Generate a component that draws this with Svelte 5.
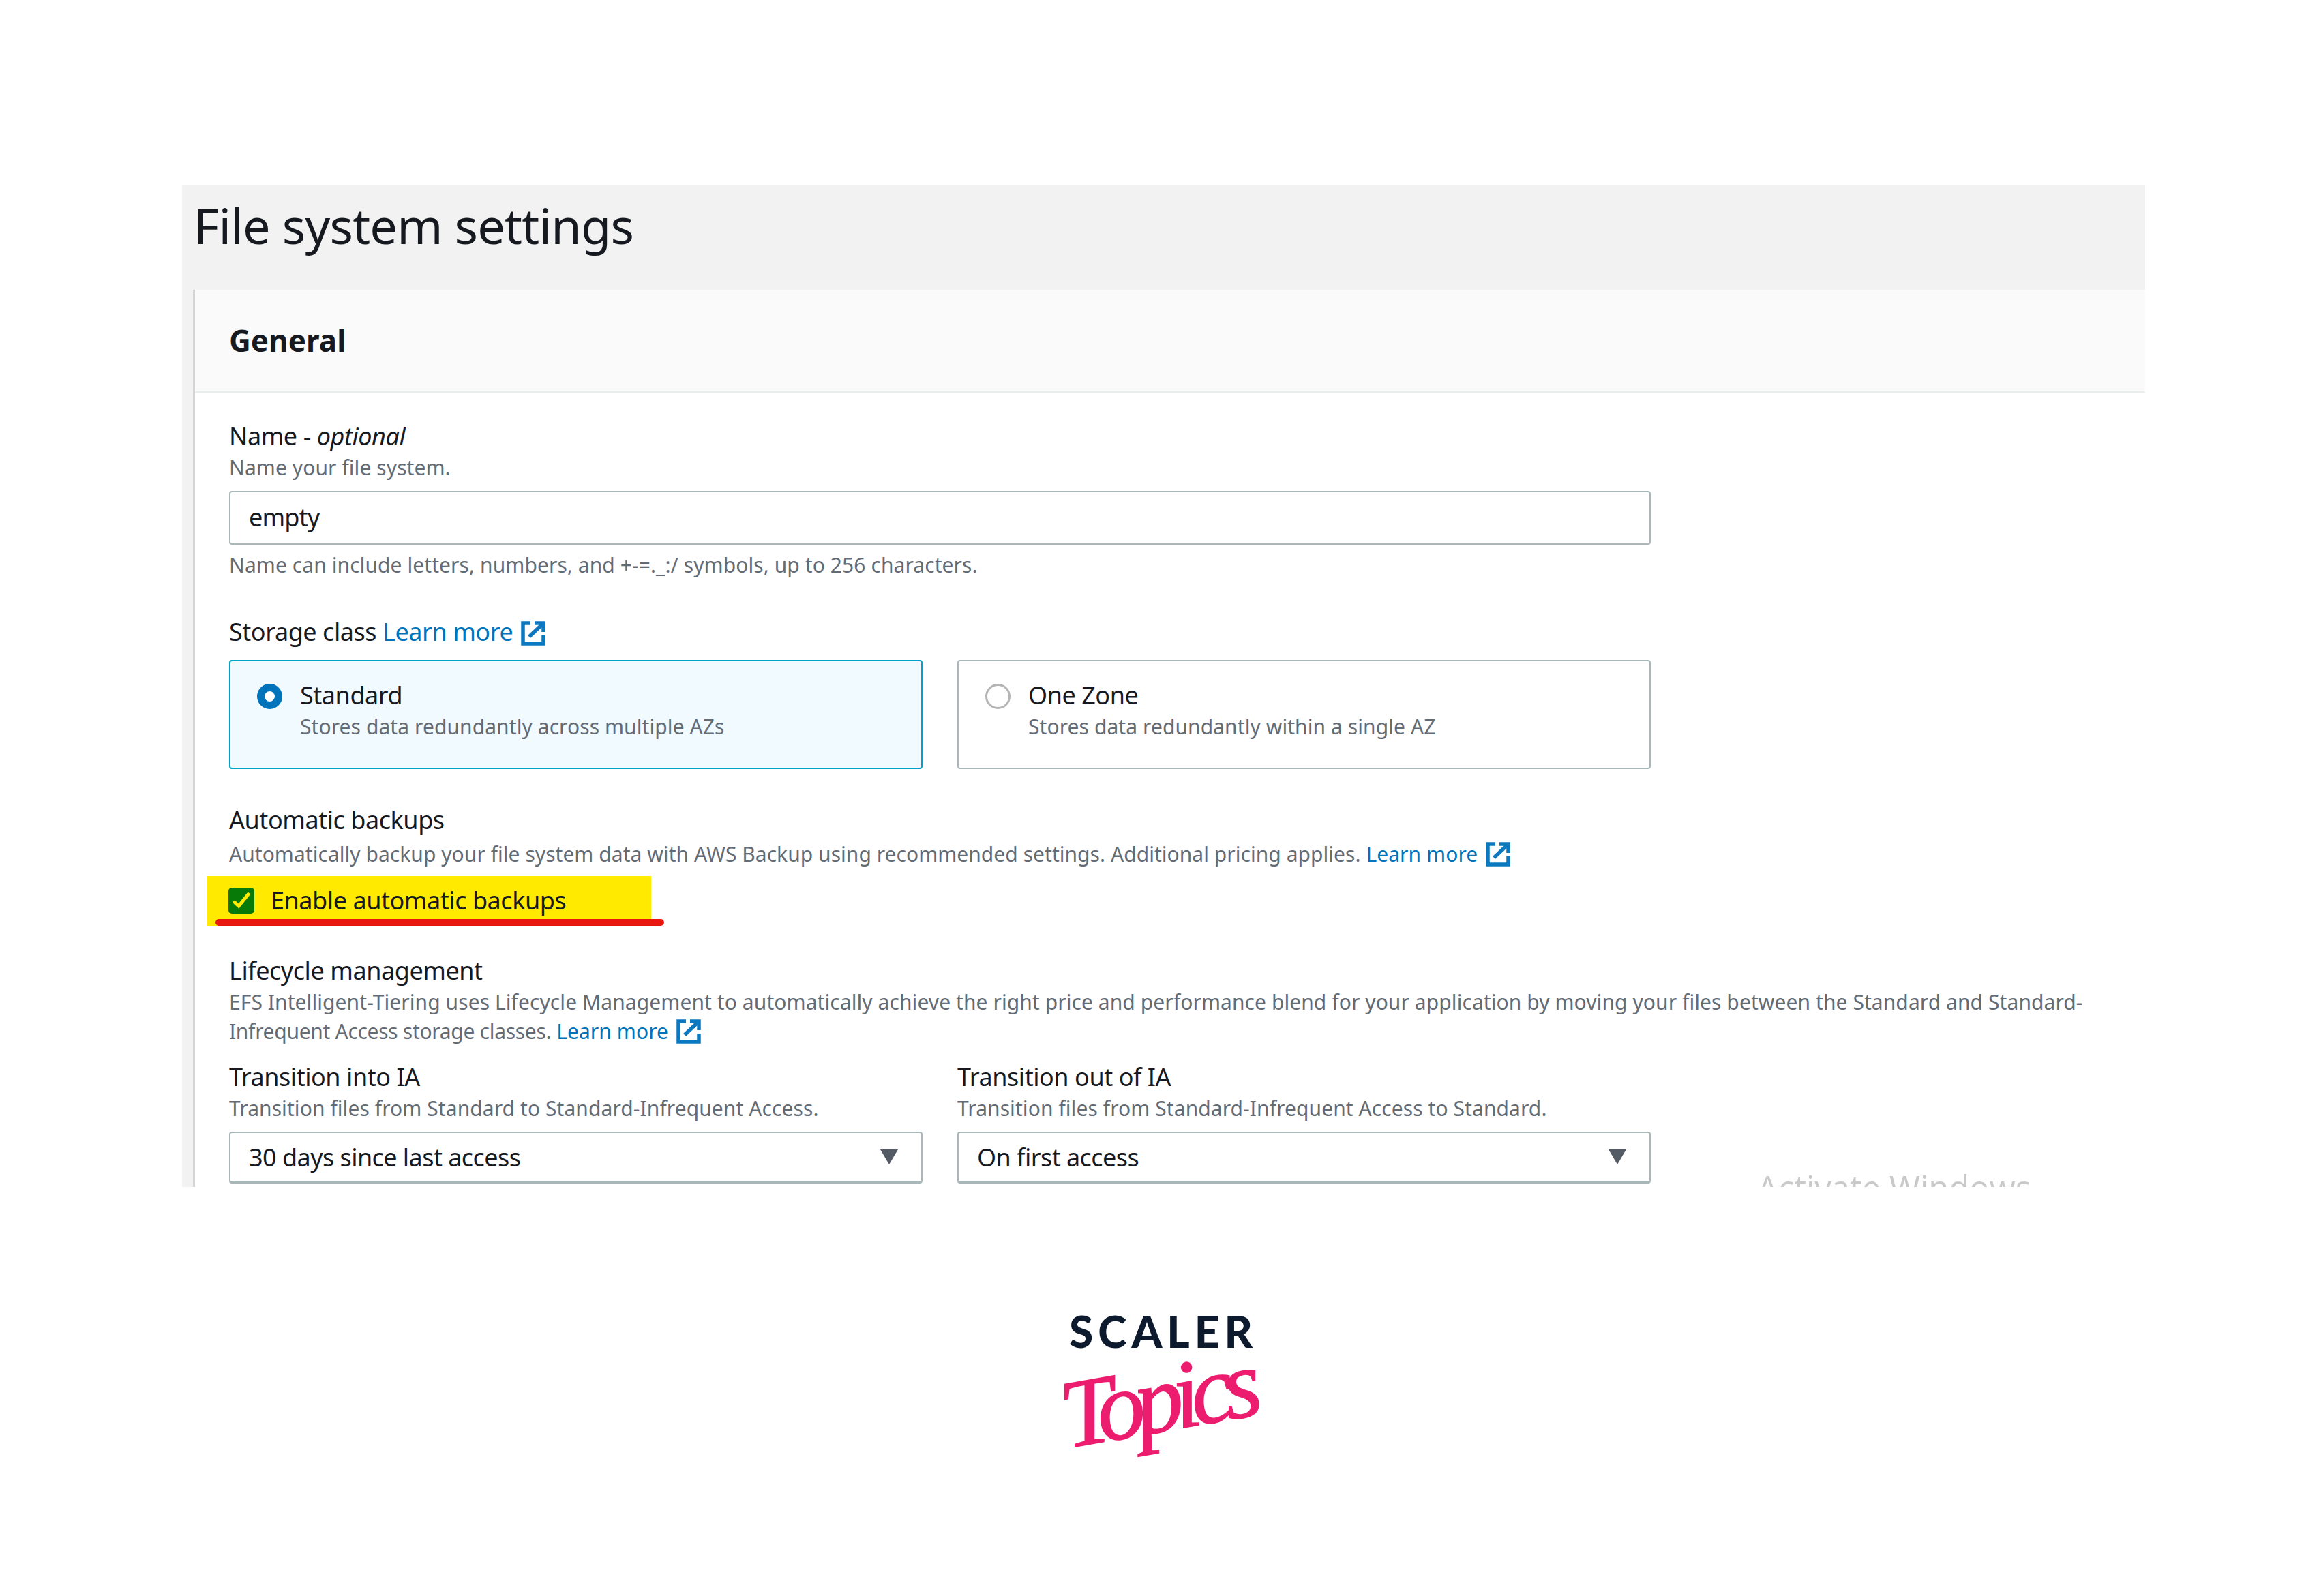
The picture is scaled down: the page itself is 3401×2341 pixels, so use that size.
<script>
  const selects = [
    { label: 'Transition into IA', desc: 'Transition files from Standard to Standard-Infrequent Access.', value: '30 days since last access' },
    { label: 'Transition out of IA', desc: 'Transition files from Standard-Infrequent Access to Standard.', value: 'On first access' }
  ];
</script>

{#snippet ext()}
  <svg class="ext" viewBox="0 0 36 36" aria-hidden="true">
    <path d="M14 3H3v30h30V21" fill="none" stroke="#0b78c0" stroke-width="5.5" />
    <path d="M20 3h13v13" fill="none" stroke="#0b78c0" stroke-width="5.5" />
    <path d="M31 5L12 23" fill="none" stroke="#0b78c0" stroke-width="5.5" />
  </svg>
{/snippet}

<div class="shot">
  <h1>File system settings</h1>
  <section class="panel">
    <header><h2>General</h2></header>
    <div class="body">
      <div class="label name-label">Name - <em>optional</em></div>
      <div class="desc name-desc">Name your file system.</div>
      <div class="input">empty</div>
      <div class="desc help">Name can include letters, numbers, and +-=._:/ symbols, up to 256 characters.</div>

      <div class="label storage">Storage class <a>Learn more</a>{@render ext()}</div>
      <div class="cards">
        <div class="card on">
          <span class="radio"></span>
          <div>
            <div class="label">Standard</div>
            <div class="desc">Stores data redundantly across multiple AZs</div>
          </div>
        </div>
        <div class="card">
          <span class="radio"></span>
          <div>
            <div class="label">One Zone</div>
            <div class="desc">Stores data redundantly within a single AZ</div>
          </div>
        </div>
      </div>

      <div class="label backups">Automatic backups</div>
      <div class="desc backups-desc"><span class="tight">Automatically backup your file system data with AWS Backup using recommended settings. Additional pricing applies.</span> <a>Learn more</a>{@render ext()}</div>
      <div class="mark">
        <span class="check">
          <svg viewBox="0 0 38 38" aria-hidden="true"><path d="M7.5 20l7.5 7L30.5 8" fill="none" stroke="#ffea00" stroke-width="5" /></svg>
        </span>
        <span class="label">Enable automatic backups</span>
      </div>
      <div class="underline"></div>

      <div class="label life">Lifecycle management</div>
      <div class="desc life-desc">EFS Intelligent-Tiering uses Lifecycle Management to automatically achieve the right price and performance blend for your application by moving your files between the Standard and Standard-<br /><span class="tighter">Infrequent Access storage classes.</span> <a>Learn more</a>{@render ext()}</div>

      <div class="cards selects">
        {#each selects as s}
          <div class="col">
            <div class="label">{s.label}</div>
            <div class="desc">{s.desc}</div>
            <div class="select">
              <span>{s.value}</span>
              <svg viewBox="0 0 26 22" aria-hidden="true"><path d="M0 0h26L13 22z" fill="#545b64" /></svg>
            </div>
          </div>
        {/each}
      </div>
    </div>
    <div class="activate">Activate Windows</div>
  </section>
</div>

<div class="logo">
  <div class="scaler">SCALER</div>
  <div class="topics">Topics</div>
</div>

<style>
  :global(body) {
    background: #fff;
    font-family: "Noto Sans", sans-serif;
    color: #16191f;
  }
  .shot {
    margin: 272px 255px 0 267px;
    height: 1469px;
    background: #f2f2f2;
    overflow: hidden;
    position: relative;
    padding-left: 16px;
  }
  h1 {
    margin: 0;
    height: 153px;
    padding-left: 1px;
    font-size: 72px;
    font-weight: 400;
    line-height: 116px;
    letter-spacing: -.8px;
    color: #16191f;
  }
  .panel {
    background: #fff;
    border-left: 3px solid #d5d5d5;
    height: 1316px;
  }
  header {
    height: 149px;
    background: #fafafa;
    border-bottom: 2px solid #eaeded;
    padding-left: 50px;
  }
  h2 {
    margin: 0;
    font-size: 44px;
    font-weight: 700;
    line-height: 148px;
  }
  .body {
    padding-left: 50px;
    font-size: 36px;
  }
  .label {
    font-size: 36px;
    line-height: 44px;
    letter-spacing: -.45px;
  }
  .desc {
    font-size: 30px;
    line-height: 40px;
    letter-spacing: .08px;
    color: #636b75;
  }
  .tight { letter-spacing: .04px; }
  .tighter { letter-spacing: -.3px; }
  a { color: #0073bb; }
  .ext {
    width: 36px;
    height: 36px;
    margin-left: 12px;
    vertical-align: -7px;
  }
  .name-label { margin-top: 42px; }
  .name-desc { margin-top: 4px; }
  .input {
    margin-top: 14px;
    width: 2085px;
    height: 79px;
    box-sizing: border-box;
    border: 2px solid #aab7b8;
    border-radius: 4px;
    padding-left: 27px;
    font-size: 36px;
    line-height: 74px;
    letter-spacing: -.8px;
  }
  .help { margin-top: 10px; }
  .storage { margin-top: 56px; }
  .cards {
    display: flex;
    gap: 51px;
    margin-top: 19px;
    width: 2085px;
  }
  .card {
    flex: 1;
    height: 160px;
    box-sizing: border-box;
    border: 2px solid #aab7b8;
    border-radius: 4px;
    display: flex;
    gap: 26px;
    padding: 28px 0 0 39px;
  }
  .card .desc { margin-top: 4px; }
  .card.on {
    border-color: #00a1c9;
    background: #f1faff;
  }
  .radio {
    width: 37px;
    height: 37px;
    box-sizing: border-box;
    border: 3px solid #b5b5b5;
    border-radius: 50%;
    background: #fff;
    margin-top: 5px;
  }
  .on .radio { border: 11px solid #0073bb; }
  .backups { margin-top: 53px; }
  .backups-desc { margin-top: 8px; }
  .mark {
    display: flex;
    align-items: center;
    gap: 24px;
    width: 652px;
    height: 73px;
    box-sizing: border-box;
    margin: 12px 0 0 -33px;
    padding: 0 0 2px 32px;
    background: #ffea00;
  }
  .check {
    width: 38px;
    height: 38px;
    background: #087a08;
    border-radius: 5px;
    display: flex;
  }
  .underline {
    width: 658px;
    height: 10px;
    margin: -10px 0 0 -20px;
    background: #e8170f;
    border-radius: 5px;
    position: relative;
  }
  .life { margin-top: 44px; }
  .life-desc { margin-top: 2px; line-height: 43px; }
  .selects { margin-top: 24px; }
  .col { flex: 1; }
  .col .desc { margin-top: 4px; }
  .select {
    margin-top: 14px;
    height: 76px;
    box-sizing: border-box;
    border: 2px solid #aab7b8;
    border-bottom-width: 4px;
    border-radius: 4px;
    padding: 0 34px 0 27px;
    display: flex;
    align-items: center;
    justify-content: space-between;
    letter-spacing: -.55px;
  }
  .select svg { width: 26px; height: 22px; }
  .activate {
    position: absolute;
    left: 2310px;
    top: 1436px;
    font-family: "Open Sans", sans-serif;
    font-size: 49px;
    color: #c9c9c9;
    white-space: nowrap;
  }
  .logo {
    width: 300px;
    margin: 180px 0 0 1558px;
  }
  .scaler {
    font-family: Lato, sans-serif;
    font-weight: 900;
    font-size: 64px;
    line-height: 64px;
    letter-spacing: 7px;
    color: #0d1a2d;
    padding-left: 10px;
  }
  .topics {
    margin: 22px 0 0 -14px;
    font-family: "Liberation Serif", serif;
    font-style: italic;
    font-size: 142px;
    line-height: 142px;
    letter-spacing: -14px;
    color: #ec1c6e;
    -webkit-text-stroke: 1.5px #ec1c6e;
    transform-origin: left top;
    transform: rotate(-10deg);
  }
</style>
